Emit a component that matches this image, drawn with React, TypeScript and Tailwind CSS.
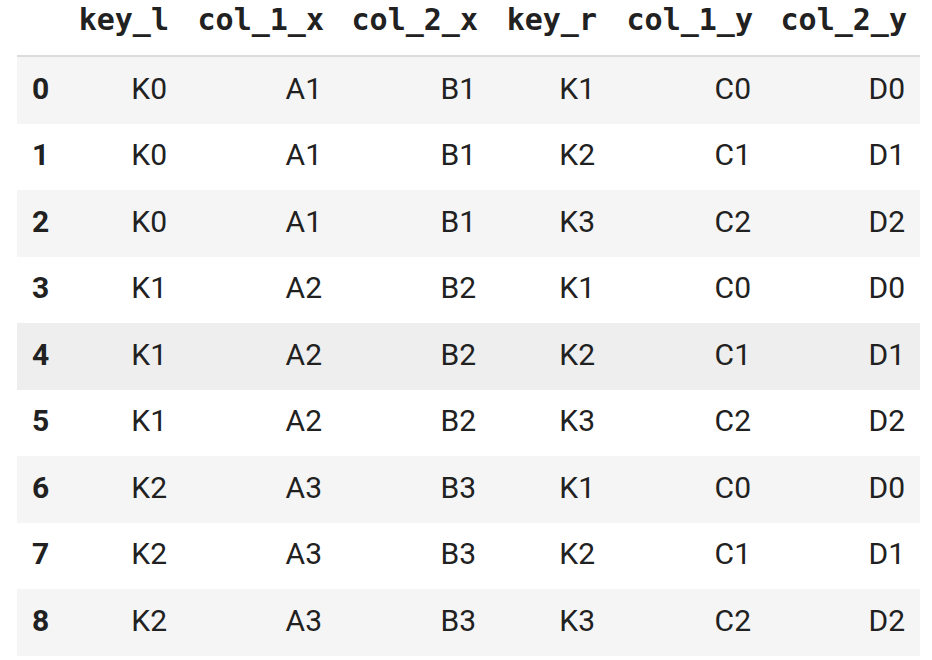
const columns = ["key_l", "col_1_x", "col_2_x", "key_r", "col_1_y", "col_2_y"];

const rows = [
  ["K0", "A1", "B1", "K1", "C0", "D0"],
  ["K0", "A1", "B1", "K2", "C1", "D1"],
  ["K0", "A1", "B1", "K3", "C2", "D2"],
  ["K1", "A2", "B2", "K1", "C0", "D0"],
  ["K1", "A2", "B2", "K2", "C1", "D1"],
  ["K1", "A2", "B2", "K3", "C2", "D2"],
  ["K2", "A3", "B3", "K1", "C0", "D0"],
  ["K2", "A3", "B3", "K2", "C1", "D1"],
  ["K2", "A3", "B3", "K3", "C2", "D2"],
];

const grid = "grid w-[903px] grid-cols-[48px_117px_155px_154px_119px_156px_154px]";

export default function App() {
  return (
    <div className="h-[660px] w-[932px] bg-white pl-[17px] text-[#212121]">
      <div className={`${grid} h-[57px] border-b-2 border-[#dcdcdc] font-['DejaVu_Sans_Mono',monospace] text-[30px] font-bold leading-[30px]`}>
        <div />
        {columns.map((c) => (
          <div key={c} className="pr-[13px] pt-[5px] text-right">
            {c}
          </div>
        ))}
      </div>
      {rows.map((r, i) => (
        <div
          key={i}
          className={`${grid} h-[66.5px] items-center pb-[4px] font-['Roboto',sans-serif] text-[30px] ${
            i === 4 ? "bg-[#eeeeee]" : i % 2 === 0 ? "bg-[#f5f5f5]" : "bg-white"
          }`}
        >
          <div className="pl-[15px] font-bold">{i}</div>
          {r.map((v, j) => (
            <div key={j} className="pr-[15px] text-right">
              {v}
            </div>
          ))}
        </div>
      ))}
    </div>
  );
}
